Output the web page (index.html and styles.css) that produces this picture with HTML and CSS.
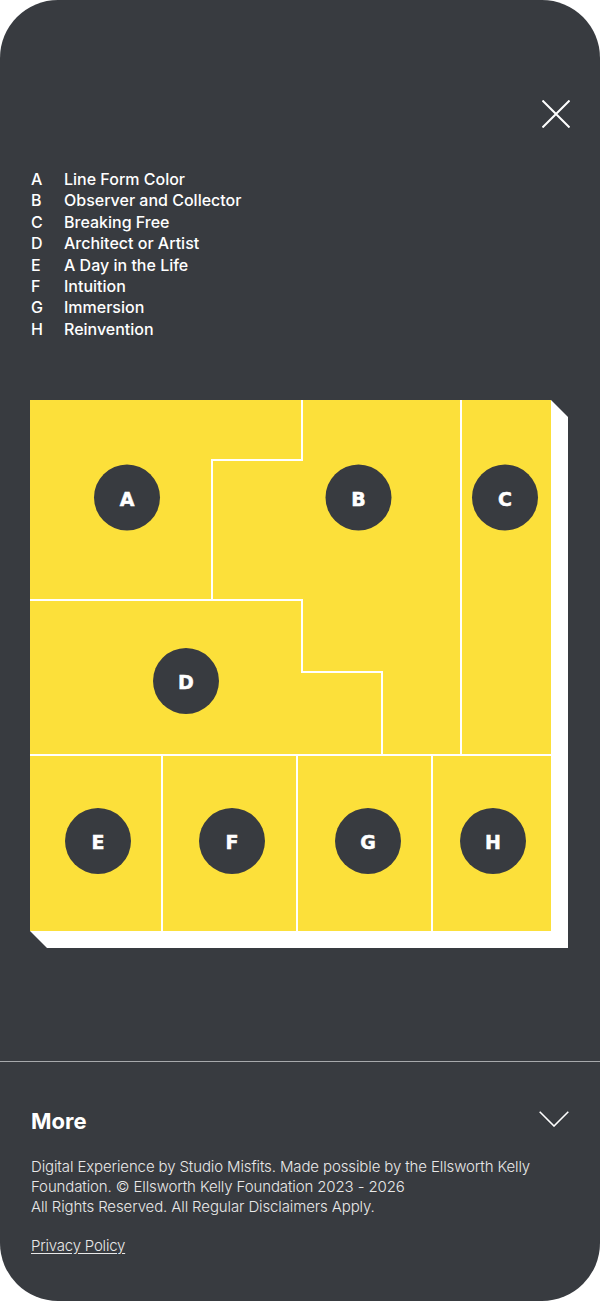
FILE: index.html
```html
<!DOCTYPE html>
<html lang="en">
<head>
<meta charset="utf-8">
<title>Ellsworth Kelly — Menu</title>
<link rel="stylesheet" href="styles.css">
</head>
<body>
<div class="frame">
  <div class="top">
    <button class="close" aria-label="Close">
      <svg width="28" height="28" viewBox="0 0 28 28"><path d="M0.5 0.5 L27.5 27.5 M27.5 0.5 L0.5 27.5" stroke="#fff" stroke-width="2" fill="none"/></svg>
    </button>
  </div>
  <ol class="chapters">
    <li><span class="key">A</span><span class="title">Line Form Color</span></li>
    <li><span class="key">B</span><span class="title">Observer and Collector</span></li>
    <li><span class="key">C</span><span class="title">Breaking Free</span></li>
    <li><span class="key">D</span><span class="title">Architect or Artist</span></li>
    <li><span class="key">E</span><span class="title">A Day in the Life</span></li>
    <li><span class="key">F</span><span class="title">Intuition</span></li>
    <li><span class="key">G</span><span class="title">Immersion</span></li>
    <li><span class="key">H</span><span class="title">Reinvention</span></li>
  </ol>
  <div class="map">
    <svg width="538" height="548" viewBox="0 0 538 548">
      <polygon points="521,0 538,17 538,548 17,548 0,531 521,531" fill="#ffffff"/>
      <rect x="0" y="0" width="521" height="531" fill="#fce03a"/>
      <g stroke="#ffffff" stroke-width="2" fill="none">
        <path d="M272,0 V60 H182 V200"/>
        <path d="M0,200 H272 V272 H352 V355"/>
        <path d="M0,355 H521"/>
        <path d="M431,0 V355"/>
        <path d="M132,355 V531 M267,355 V531 M402,355 V531"/>
      </g>
      <g class="pins">
        <circle cx="97" cy="97.5" r="33"/><text x="97" y="98.5">A</text>
        <circle cx="328.5" cy="97.5" r="33"/><text x="328.5" y="98.5">B</text>
        <circle cx="475" cy="97.5" r="33"/><text x="475" y="98.5">C</text>
        <circle cx="156" cy="281" r="33"/><text x="156" y="282">D</text>
        <circle cx="68" cy="441" r="33"/><text x="68" y="442">E</text>
        <circle cx="202" cy="441" r="33"/><text x="202" y="442">F</text>
        <circle cx="338" cy="441" r="33"/><text x="338" y="442">G</text>
        <circle cx="463" cy="441" r="33"/><text x="463" y="442">H</text>
      </g>
    </svg>
  </div>
  <footer class="footer">
    <div class="more">
      <span class="more-label">More</span>
      <svg class="chev" width="30" height="16" viewBox="0 0 30 16"><path d="M0.7 0.7 L15 15 L29.3 0.7" stroke="#fff" stroke-width="1.6" fill="none"/></svg>
    </div>
    <p class="credits">Digital Experience by Studio Misfits. Made possible by the Ellsworth Kelly<br>Foundation. © Ellsworth Kelly Foundation 2023 - 2026<br>All Rights Reserved. All Regular Disclaimers Apply.</p>
    <a class="privacy" href="#">Privacy Policy</a>
  </footer>
</div>
</body>
</html>
```
FILE: styles.css
```css
html, body {
  margin: 0;
  padding: 0;
  background: #ffffff;
}
body {
  font-family: Inter, "Liberation Sans", Arial, sans-serif;
}
.frame {
  width: 600px;
  height: 1301px;
  border-radius: 58px;
  background: #383b40;
  display: flex;
  flex-direction: column;
  overflow: hidden;
  color: #ffffff;
}
.top {
  display: flex;
  justify-content: flex-end;
  padding: 100px 30px 0 30px;
}
.close {
  width: 28px;
  height: 28px;
  padding: 0;
  border: 0;
  background: none;
  display: block;
}
.close svg { display: block; }
.chapters {
  list-style: none;
  margin: 41px 0 0 0;
  padding: 0 0 0 31px;
  font-size: 16px;
  line-height: 21.4px;
  font-weight: 500;
}
.chapters li {
  display: flex;
}
.key {
  width: 33px;
}
.map {
  margin: 60px 0 0 30px;
}
.map svg { display: block; }
.pins circle { fill: #383b40; }
.pins text {
  fill: #ffffff;
  font-family: "DejaVu Sans", sans-serif;
  font-weight: 700;
  font-size: 19px;
  text-anchor: middle;
  dominant-baseline: central;
  stroke: #ffffff;
  stroke-width: 0.5px;
}
.footer {
  margin-top: auto;
  border-top: 1px solid #a7a9ac;
  height: 240px;
  padding: 46px 31px 0 31px;
  box-sizing: border-box;
}
.more {
  display: flex;
  justify-content: space-between;
  align-items: flex-start;
  height: 26px;
}
.more-label {
  font-size: 22px;
  line-height: 26px;
  font-weight: 700;
}
.chev {
  display: block;
  margin-top: 3px;
}
.credits {
  margin: 23px 0 0 0;
  font-size: 15px;
  line-height: 20px;
  color: #e8e8e8;
  font-weight: 300;
  letter-spacing: -0.12px;
  white-space: nowrap;
}
.privacy {
  display: inline-block;
  margin-top: 19px;
  font-size: 15px;
  line-height: 20px;
  color: #e8e8e8;
  font-weight: 300;
  letter-spacing: -0.22px;
  text-decoration: underline;
  text-underline-offset: 2px;
}
```
